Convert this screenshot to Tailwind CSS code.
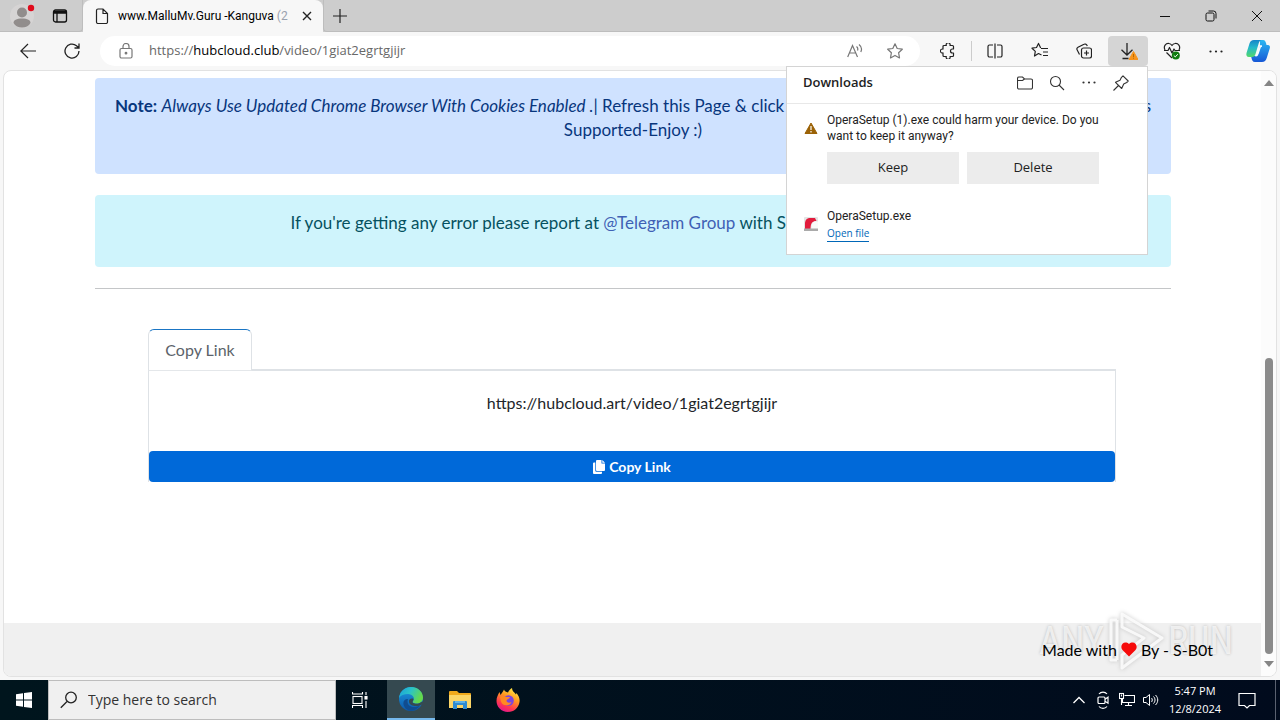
<!DOCTYPE html>
<html lang="en">
<head>
<meta charset="utf-8">
<title>Downloads</title>
<script src="https://cdn.jsdelivr.net/npm/@tailwindcss/browser@4"></script>
</head>
<body class="relative flex h-screen flex-col overflow-hidden bg-[#f7f7f7] font-['Open_Sans',sans-serif] text-black">

<!-- Tab strip -->
<header class="flex h-8 shrink-0 items-stretch bg-[#cdcdcd]">
  <div class="flex w-[83px] items-center gap-6 rounded-br border-r border-b border-[#bdbdbd] pl-2">
    <button aria-label="Profile" class="w-7"><svg class="size-7" viewBox="0 0 28 28"><circle cx="14" cy="14" r="12" fill="#d6d4d4"/><circle cx="14" cy="10.500" r="5" fill="#918d8c"/><path d="M5.500 21c0-3 3-4.500 8.500-4.500s8.500 1.500 8.500 4.500c-1.500 3-5 4.500-8.500 4.500S7 24 5.500 21z" fill="#918d8c"/><circle cx="23" cy="6" r="3.200" fill="#e00b1c"/></svg></button>
    <button aria-label="Tab actions" class="-ml-2"><svg class="size-4" viewBox="0 0 16 16" fill="none" stroke="#111" stroke-width="1.300"><rect x="1.500" y="2" width="13" height="12" rx="2"/><path d="M1.500 3.500h13M1.500 5h13M5 5v9" /></svg></button>
  </div>
  <div class="flex w-60 items-center rounded-t-lg bg-[#f7f7f7] pr-2 pl-[11px]">
    <svg class="size-4 shrink-0" viewBox="0 0 16 16" fill="none" stroke="#222" stroke-width="1.200"><path d="M2.500 2.500A1.500 1.500 0 0 1 4 1h5l4.500 4.500V14a1.500 1.500 0 0 1-1.500 1.500H4A1.500 1.500 0 0 1 2.500 14zM9 1v4.500h4.500"/></svg>
    <span class="ml-2 grow font-['Roboto','Open_Sans',sans-serif] text-xs whitespace-nowrap">www.MalluMv.Guru -Kanguva <span class="text-gray-400">(2</span></span>
    <button aria-label="Close tab"><svg class="size-4" viewBox="0 0 16 16" stroke="#222" stroke-width="1.400"><path d="M4 4l8 8M12 4l-8 8"/></svg></button>
  </div>
  <div class="flex grow items-center rounded-bl border-b border-l border-[#bdbdbd] pl-2">
    <button aria-label="New tab"><svg class="size-4" viewBox="0 0 16 16" stroke="#222" stroke-width="1.200"><path d="M8 1v14M1 8h14"/></svg></button>
    <div class="ml-auto flex items-center">
      <button aria-label="Minimize" class="flex w-[46px] justify-center"><svg class="size-3" viewBox="0 0 12 12" stroke="#111"><path d="M1 6.500h10"/></svg></button>
      <button aria-label="Restore" class="flex w-[46px] justify-center"><svg class="size-3" viewBox="0 0 12 12" fill="none" stroke="#111"><rect x="1" y="3" width="8" height="8" rx="1.500"/><path d="M3.500 1h5A2.500 2.500 0 0 1 11 3.500v5"/></svg></button>
      <button aria-label="Close" class="flex w-[46px] justify-center"><svg class="size-3" viewBox="0 0 12 12" stroke="#111"><path d="M1 1l10 10M11 1L1 11"/></svg></button>
    </div>
  </div>
</header>

<!-- Address bar -->
<nav class="flex h-[38px] shrink-0 items-center">
  <button aria-label="Back" class="ml-5"><svg class="size-4" viewBox="0 0 16 16" fill="none" stroke="#222" stroke-width="1.200"><path d="M16 8H.800M8 1L.800 8 8 15"/></svg></button>
  <button aria-label="Refresh" class="ml-7"><svg class="size-4" viewBox="0 0 16 16" fill="none" stroke="#222" stroke-width="1.300"><path d="M15 8A7 7 0 1 1 12.500 2.700L15 5M15 .500V5h-4.500"/></svg></button>
  <div class="ml-5 flex h-[30px] grow items-center rounded-full bg-white pr-[17px] pl-[18px] text-[#686868]">
    <svg class="size-4" viewBox="0 0 16 16" fill="none" stroke="#777" stroke-width="1.200"><rect x="2" y="5.500" width="12" height="9.500" rx="1.500"/><path d="M5 5.500V3.500a3 3 0 0 1 6 0v2"/><circle cx="8" cy="10.200" r=".8" fill="#777"/></svg>
    <a href="#" class="ml-[15px] text-[13px]">https://<span class="text-black">hubcloud.club</span>/video/1giat2egrtgjijr</a>
    <button aria-label="Read aloud" class="ml-auto"><svg class="size-4" viewBox="0 0 16 16" fill="none" stroke="#777" stroke-width="1.200"><path d="M.700 14L5.500 2.500 10.500 14M2.500 10h6.300M9.500 3.500c1.300 1 1.600 2.500 1 4M12 1.500c2.500 2 3 5 1.800 7.500"/></svg></button>
    <button aria-label="Favorite" class="ml-6"><svg class="size-4" viewBox="0 0 16 16" fill="none" stroke="#777" stroke-width="1.200" stroke-linejoin="round"><path d="M8 .800l2.200 4.700 5.100.700-3.700 3.500.9 5.200L8 12.400l-4.500 2.500.9-5.200L.700 6.200l5.100-.7z"/></svg></button>
  </div>
  <div class="ml-5 flex items-center text-[#222]">
    <button aria-label="Extensions"><svg class="size-4" viewBox="0 0 16 16" fill="none" stroke="currentColor" stroke-width="1.200" stroke-linejoin="round"><path d="M3 3.500a1 1 0 0 1 1-1h2.300a2 2 0 1 1 3.700 0h2.500a1 1 0 0 1 1 1V6h-1a2 2 0 1 0 0 4h1v2.500a1 1 0 0 1-1 1H10a2 2 0 1 1-3.700 0H4a1 1 0 0 1-1-1v-2.600a2 2 0 1 1 0-3.800z"/></svg></button>
    <span class="mx-[15px] h-5 w-px bg-[#ccc]"></span>
    <button aria-label="Split screen"><svg class="size-4" viewBox="0 0 16 16" fill="none" stroke="currentColor" stroke-width="1.200"><path d="M6 2H2.500A1.500 1.500 0 0 0 1 3.500v9A1.500 1.500 0 0 0 2.500 14H6M10 2h3.500A1.500 1.500 0 0 1 15 3.500v9a1.500 1.500 0 0 1-1.500 1.500H10M8 .500v15"/></svg></button>
    <button aria-label="Favorites" class="ml-7"><svg class="size-[18px]" viewBox="0 0 18 18" fill="none" stroke="currentColor" stroke-width="1.200" stroke-linejoin="round"><path d="M10 6.500h7M12 10h5M12 13.500h5M10.500 13l-3-1.500L3.500 14l.8-4.600L1 6.200 5.500 5.500 7.500 1.400 9.700 6"/></svg></button>
    <button aria-label="Collections" class="ml-[27px]"><svg class="size-4" viewBox="0 0 16 16" fill="none" stroke="currentColor" stroke-width="1.200"><rect x="5.500" y="5" width="10" height="10" rx="2"/><path d="M10.500 7.500v5M8 10h5M3.500 11.500L1.200 7A2 2 0 0 1 2 4.300l6-3A2 2 0 0 1 10.800 2l.5 1"/></svg></button>
    <button aria-label="Downloads" class="ml-4 flex h-[30px] w-10 items-center justify-center rounded bg-[#d5d5d5]"><svg class="h-[18px] w-5" viewBox="0 0 20 18" fill="none" stroke="currentColor" stroke-width="1.300"><path d="M9 1v12M3.500 7.800L9 13l5.500-5.200M4.500 16.500h6"/><path d="M15.500 9.500L20 17.500h-9z" fill="#f7941d" stroke="#f7941d" stroke-linejoin="round" stroke-width="1"/><path d="M15.500 12v3M15.500 15.700v1" stroke="#b96a00" stroke-width="1"/></svg></button>
    <button aria-label="Browser essentials" class="ml-[15px]"><svg class="size-[18px]" viewBox="0 0 18 18" fill="none" stroke="currentColor" stroke-width="1.200" stroke-linejoin="round"><path d="M2 8C0 4 3 1 6 1.500c1.500.2 2.500 1.200 3 2 .5-.8 1.500-1.800 3-2 3-.5 6 2.500 4 6.500M1 8.500h4L6.500 5.500 9 11l2-4 1 1.500h5M3.500 10.500L9 16"/><circle cx="12.800" cy="13.500" r="4" fill="#107c10" stroke="none"/><path d="M10.800 13.500l1.500 1.400 2.500-2.700" stroke="#fff" stroke-width="1"/></svg></button>
    <button aria-label="Settings and more" class="ml-[27px]"><svg class="size-4" viewBox="0 0 16 16" fill="currentColor"><circle cx="2.500" cy="8.500" r="1.100"/><circle cx="8" cy="8.500" r="1.100"/><circle cx="13.500" cy="8.500" r="1.100"/></svg></button>
    <button aria-label="Copilot" class="mr-2.5 ml-[22px]"><svg class="size-6" viewBox="0 0 24 24"><defs><linearGradient id="ca" x1="0" y1="0" x2="0" y2="1"><stop offset="0" stop-color="#1685c9"/><stop offset=".45" stop-color="#24b9cb"/><stop offset="1" stop-color="#53d86a"/></linearGradient><linearGradient id="cb" x1="0" y1="0" x2="0" y2="1"><stop offset="0" stop-color="#2bb8f2"/><stop offset="1" stop-color="#1657d6"/></linearGradient></defs><path d="M14 1h3c2 0 2.500 1.500 3 3l.5 2H22c2 0 2.200 2 1.700 3.500l-2.800 9C20 21.500 18.500 23 16 23H9c-2.500 0-3-2-3.500-4L5 17h4c2 0 2.500-1 3-3l2-7z" fill="url(#cb)"/><path d="M8 1h8c-2 0-2.700 1.500-3.200 3L9.500 15c-.6 2-1.500 3-3.500 3H3c-2.500 0-3-2-2.500-4l3-9.500C4.200 2.500 5.500 1 8 1z" fill="url(#ca)"/><path d="M14.500 7h1.500c-1.500 0-2 1-2.500 2.500l-1.700 5c-.4 1.500-1.300 2.500-2.300 2.500H9.500c1.300 0 2-.8 2.500-2.500z" fill="#f4fbff" stroke="#f4fbff" stroke-width="1.500"/></svg></button>
  </div>
</nav>

<!-- Page viewport -->
<main class="mx-[3px] mb-[3px] flex min-h-0 grow overflow-hidden rounded-lg border border-[#e2e2e2] bg-white">
  <div class="flex grow flex-col font-[Lato,sans-serif] text-base leading-6">
    <div class="mr-[90px] ml-[91px] pt-[7px]">
      <section class="h-24 rounded bg-[#cfe2ff] px-5 pt-4 text-center text-[17px] text-[#08367d]">
        <div class="flex justify-between whitespace-nowrap"><p><b>Note:</b> <i>Always Use Updated Chrome Browser With Cookies Enabled .</i>| Refresh this Page &amp; click</p><p>s</p></div>
        <p>Supported-Enjoy :)</p>
      </section>
      <section class="mt-[21px] h-[72px] rounded bg-[#cff4fc] px-4 pt-4 text-center text-[17px] text-[#055160]">
        <p>If you're getting any error please report at <a href="#" class="text-[#3f61b5]">@Telegram Group</a> with Sharing Link &amp; Screenshot.</p>
      </section>
      <hr class="mt-[21px] border-[#c4c6c8]">
      <section class="mr-[55px] ml-[53px] mt-10">
        <div class="flex"><button class="-mb-px h-[42px] w-[104px] rounded-t-md border border-t-[#1a75c4] border-r-[#dee2e6] border-b-[#e4e7ea] border-l-[#dee2e6] bg-white text-[#5c636a]">Copy Link</button><div class="grow border-b border-[#dee2e6]"></div></div>
        <div class="border border-b-0 border-[#dee2e6]">
          <p class="h-20 pt-5 text-center text-[#212529]">https://hubcloud.art/video/1giat2egrtgjijr</p>
          <button class="flex h-[31px] w-full items-center justify-center gap-1 rounded bg-[#0069d9] text-sm font-bold text-white"><svg class="h-3.5 w-3" viewBox="0 0 12 14" fill="#fff"><path d="M4 0h4.500v3.500H12V10a1 1 0 0 1-1 1H4a1 1 0 0 1-1-1V1a1 1 0 0 1 1-1zM9.300 0L12 2.700H9.300z"/><path d="M0 3.500a1 1 0 0 1 1-1h1.300v8.200a1 1 0 0 0 1 1H9V13a1 1 0 0 1-1 1H1a1 1 0 0 1-1-1z"/></svg>Copy Link</button>
        </div>
      </section>
    </div>
    <footer class="mt-auto flex h-[53px] items-center justify-end bg-[#f0f0f0] pr-12 text-black"><p class="relative z-10 flex items-center gap-1">Made with <svg class="h-[15px] w-4" viewBox="0 0 16 15" fill="#f60b0b"><path d="M8 14.500L1.500 8C-2 4 3-2.500 8 2c5-4.500 10 2 6.500 6z"/></svg> By - S-B0t</p></footer>
  </div>
  <div class="flex w-[15px] flex-col items-center bg-[#fcfcfc] py-2" aria-hidden="true">
    <svg class="h-2 w-2.5" viewBox="0 0 10 8" fill="#858585"><path d="M5 1l5 6H0z"/></svg>
    <div class="mt-auto mb-1.5 h-[296px] w-2 rounded-full bg-[#8b8b8b]"></div>
    <svg class="h-2 w-2.5" viewBox="0 0 10 8" fill="#858585"><path d="M5 7L0 1h10z"/></svg>
  </div>
</main>

<!-- Taskbar -->
<footer class="flex h-10 shrink-0 items-stretch bg-linear-to-r from-[#00151d] to-[#010b1d] text-white">
  <button aria-label="Start" class="flex w-12 items-center justify-center"><svg class="size-4" viewBox="0 0 16 16" fill="#fff"><path d="M0 2.200l7-1v6.300H0zM8 1l8-1v7.500H8zM0 8.500h7v6.300l-7-1zM8 8.500h8V16l-8-1z"/></svg></button>
  <label class="flex w-72 items-center border border-[#bdbdbd] bg-[#f0f0f0] pl-[11px]">
    <svg class="size-[18px] shrink-0" viewBox="0 0 18 18" fill="none" stroke="#222" stroke-width="1.300"><circle cx="11" cy="6.500" r="5.300"/><path d="M7 10.500L.800 16.800"/></svg>
    <input aria-label="Search" placeholder="Type here to search" class="ml-2.5 w-56 bg-transparent text-sm text-black outline-none placeholder:text-[#333]">
  </label>
  <button aria-label="Task view" class="flex w-12 items-center justify-center"><svg class="size-4" viewBox="0 0 16 16" fill="none" stroke="#fff" stroke-width="1.100"><rect x="1" y="4.500" width="9" height="7"/><path d="M.500 0v2h10V0M.500 16v-2.500h10V16M14 0v3M14 9v7"/><rect x="13" y="4.500" width="2" height="2.500" fill="#fff"/></svg></button>
  <button aria-label="Edge" class="ml-[3px] flex w-12 items-center justify-center border-b-2 border-[#76b9ed] bg-[#354950]"><svg class="size-6" viewBox="0 0 24 24"><defs><linearGradient id="ea" x1="0" y1="0" x2="1" y2=".4"><stop offset="0" stop-color="#199fdb"/><stop offset=".5" stop-color="#2bc3c8"/><stop offset="1" stop-color="#65d94a"/></linearGradient><linearGradient id="eb" x1="0" y1="0" x2="0" y2="1"><stop offset="0" stop-color="#1e9ae0"/><stop offset="1" stop-color="#0b58ab"/></linearGradient></defs><circle cx="12" cy="12" r="12" fill="url(#eb)"/><path d="M0 11C1 4 6 0 12 0c7 0 12 5 12 10.500 0 4-3 6-6.500 6-3 0-4.500-1.200-3.500-2.500 2.500-3-.5-7-5-7C5 7 1.500 8.500 0 11z" fill="url(#ea)"/><path d="M9 12c-2 6 3 10.500 12 6.500-3 5-9 6.500-13 4C3 19 3 12 9 12z" fill="#104c8f"/><path d="M13.800 14.200c-1 1.500 1 2.500 3.700 2.500 2 0 3.500-.7 4.500-1.500l2-.7v2.500c-4 3-13 3-14-2-.5-2.500 1.500-4 4-3.500.8.500.5 1.700-.2 2.700z" fill="#354950"/></svg></button>
  <button aria-label="File Explorer" class="flex w-[49px] items-center justify-center"><svg class="h-5 w-[22px]" viewBox="0 0 22 20"><path d="M0 2a1 1 0 0 1 1-1h7l2 2h11a1 1 0 0 1 1 1v14H0z" fill="#f0a91c"/><path d="M0 5h22v13H0z" fill="#fbd567"/><path d="M4 19v-7a1 1 0 0 1 1-1h12a1 1 0 0 1 1 1v7h-4v-4H8v4z" fill="#2f8bd0"/><path d="M6 11h10v2H6z" fill="#5fb2e6"/></svg></button>
  <button aria-label="Firefox" class="flex w-12 items-center justify-center"><svg class="size-6" viewBox="0 0 24 24"><defs><linearGradient id="fa" x1=".8" y1="0" x2=".3" y2="1"><stop offset="0" stop-color="#fff04a"/><stop offset=".4" stop-color="#ff9a20"/><stop offset=".75" stop-color="#ff3750"/><stop offset="1" stop-color="#e3158f"/></linearGradient></defs><path d="M3.500 4l1 3C6 4.500 7 4 8 1.500 8.700 3.500 10 4 12 4.500 13 2 14.500 1 16 0c0 3 2 4 4 6.500l.5-1.500C23 8 24 11 23.500 14 22.500 20 18 24 12 24 5 24 .500 18.500.500 13c0-4 1.500-6 3-9z" fill="url(#fa)"/><circle cx="12.500" cy="12.500" r="5.300" fill="#7a45df"/><path d="M4 9c2-2 4-1.500 6 0h4c-.5 2-3 2-3.500 3.500 0 2 2.500 3 5 1.500-1 4-9 5-10.500-.5z" fill="#ff8a22"/></svg></button>
  <div class="ml-auto flex items-center">
    <button aria-label="Show hidden icons"><svg class="h-3 w-3" viewBox="0 0 12 12" fill="none" stroke="#fff" stroke-width="1.300"><path d="M.500 9L6 3.500 11.500 9"/></svg></button>
    <button aria-label="Meet now" class="ml-3"><svg class="h-[18px] w-3" viewBox="0 0 12 18" fill="none" stroke="#fff" stroke-width="1.200"><rect x="1" y="6" width="7" height="6.500" rx="1"/><path d="M8 8.200l3-2v6l-3-2M2 3C4 .500 8 .500 10 3M2 15.500c2 2.500 6 2.500 8 0"/></svg></button>
    <button aria-label="Network" class="ml-2.5"><svg class="h-4 w-4" viewBox="0 0 16 16" fill="none" stroke="#fff" stroke-width="1.100"><path d="M5.500 3.500h10v7h-12V7M9.500 10.500v3M6 13.500h7M2.500 7v6"/><rect x=".5" y="1.500" width="4" height="5"/><path d="M2.500 2.500v2"/></svg></button>
    <button aria-label="Volume" class="ml-2"><svg class="h-4 w-4" viewBox="0 0 16 16" fill="none" stroke="#fff"><path d="M.500 5.500H3L6.500 2.500v11L3 10.500H.500zM8.500 6c1 1 1 3 0 4M10.500 4.500c2 2 2 5 0 7M12.500 3c3 3 3 7 0 10"/></svg></button>
    <div class="ml-[7px] w-[58px] text-center text-[11px] leading-[18px] whitespace-nowrap"><p>5:47 PM</p><p>12/8/2024</p></div>
    <button aria-label="Notifications" class="mr-[19px] ml-3.5"><svg class="h-[18px] w-[18px]" viewBox="0 0 18 18" fill="none" stroke="#fff" stroke-width="1.200"><path d="M1 2.500h16v12h-5.500L9 17l-2.500-2.500H1z"/></svg></button>
    <span class="h-full w-px bg-[#5a6170]"></span><span class="w-1"></span>
  </div>
</footer>

<!-- Downloads flyout -->
<aside class="absolute top-[66px] right-[132px] w-[362px] border border-[#d4d4d4] bg-white pb-3 text-[#222]">
  <div class="flex h-[37px] items-center border-b border-[#e8e8e8] pr-[18px] pb-1 pl-4">
    <h2 class="text-[13px] font-semibold">Downloads</h2>
    <div class="ml-auto flex items-center gap-4">
      <button aria-label="Open downloads folder"><svg class="size-4" viewBox="0 0 16 16" fill="none" stroke="#333" stroke-width="1.100"><path d="M.500 3.500A1.500 1.500 0 0 1 2 2h3.500L7.500 4H14a1.500 1.500 0 0 1 1.500 1.500v7A1.500 1.500 0 0 1 14 14H2a1.500 1.500 0 0 1-1.500-1.500zM.500 5.500H5.500l2-1.500"/></svg></button>
      <button aria-label="Search downloads"><svg class="size-4" viewBox="0 0 16 16" fill="none" stroke="#333" stroke-width="1.100"><circle cx="6.500" cy="6.500" r="5"/><path d="M10 10l5 5"/></svg></button>
      <button aria-label="More options"><svg class="size-4" viewBox="0 0 16 16" fill="#333"><circle cx="2.500" cy="7.500" r="1.100"/><circle cx="8" cy="7.500" r="1.100"/><circle cx="13.500" cy="7.500" r="1.100"/></svg></button>
      <button aria-label="Pin"><svg class="size-4" viewBox="0 0 16 16" fill="none" stroke="#333" stroke-width="1.100" stroke-linejoin="round"><path d="M10 .800L15.200 6l-1.500 1.500-3 1.500-2 4.500L2.500 7.300l4.500-2 1.500-3zM5.500 10.500L.500 15.500"/></svg></button>
    </div>
  </div>
  <div class="flex pt-2 pl-4">
    <svg class="mt-2 size-4" viewBox="0 0 16 16"><path d="M8 3l6 10.500H2z" fill="#9b6206" stroke="#9b6206" stroke-linejoin="round"/><path d="M8 6v4M8 11v1.500" stroke="#fff" stroke-width="1.200"/></svg>
    <div class="ml-2">
      <p class="font-['Roboto','Open_Sans',sans-serif] text-xs leading-4">OperaSetup (1).exe could harm your device. Do you<br>want to keep it anyway?</p>
      <div class="mt-2 flex gap-2 text-[13px]"><button class="h-8 w-[132px] bg-[#ececec]">Keep</button><button class="h-8 w-[132px] bg-[#ececec]">Delete</button></div>
    </div>
  </div>
  <div class="mt-6 flex pl-4">
    <svg class="mt-2 size-4" viewBox="0 0 16 16"><rect x="1" y="1" width="14" height="14" rx="1" fill="#e4e4e4"/><path d="M2 13V8c0-4 2-6 5-6h5l1.500 3c-4 0-6 2-6 8z" fill="#e21b3c"/><path d="M8.500 13c-.5-5 1-7.500 4-7.500H15V13z" fill="#fafafa"/><path d="M1 12.500h14V15H1z" fill="#aaa"/></svg>
    <div class="ml-2 flex flex-col items-start"><p class="font-['Roboto','Open_Sans',sans-serif] text-xs leading-4">OperaSetup.exe</p><a href="#" class="mt-px border-b border-[#0067b8] text-[10px] leading-4 text-[#0067b8]">Open file</a></div>
  </div>
</aside>

<!-- Translucent brand mark over the page -->
<div class="pointer-events-none absolute right-[47px] bottom-[48px] flex items-center gap-0.5 font-['Liberation_Sans_Narrow','Roboto_Condensed',sans-serif] text-[38px] leading-[62px] text-white/70 [text-shadow:0_0_3px_#bbb]">
  <span>ANY</span><svg class="h-[62px] w-[60px]" viewBox="0 0 60 62" fill="none" stroke="#fff" stroke-opacity=".8" stroke-width="3" stroke-linejoin="round" style="filter:drop-shadow(0 0 2px #bbb)"><path d="M16 4l40 24-40 30V45l22-17-22-11zM11 10H5v40h6M11 10v40"/></svg><span>RUN</span>
</div>
</body>
</html>
